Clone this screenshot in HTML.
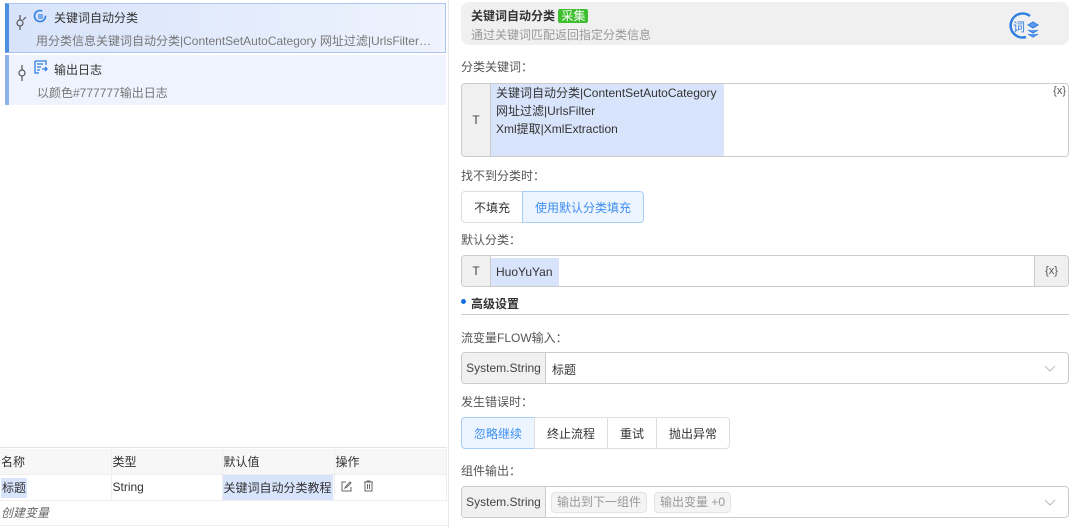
<!DOCTYPE html>
<html><head><meta charset="utf-8"><style>
*{box-sizing:border-box;margin:0;padding:0}
body{width:1072px;height:528px;background:#fff;font-family:"Liberation Sans","Noto Sans CJK SC",sans-serif;font-size:12px;color:#333;position:relative;overflow:hidden}
.a{position:absolute}
.lbl{position:absolute;left:461px;color:#555;font-size:12px}
.box{position:absolute;border:1px solid #ccc;border-radius:4px;background:#fff;overflow:hidden}
.add{position:absolute;top:0;bottom:0;background:#f0f0f0;color:#444;display:flex;align-items:center;justify-content:center}
.btn{position:absolute;border:1px solid #ddd;display:flex;align-items:center;justify-content:center;font-size:12px;color:#333;background:#fff}
.btn.on{background:#ecf4ff;border-color:#a7cdf8;color:#3e8ff0}
td{border-right:1px solid #eee;padding-left:1px}
</style></head><body>
<div class="a" style="left:448px;top:0;width:1px;height:528px;background:#e8e8e8"></div>
<div class="a" style="left:5px;top:3px;width:441px;height:50px;border:1px solid #a9c4f5;border-left:4px solid #4d8fe0;background:linear-gradient(90deg,#d8e4fb,#eef3fd)"></div>
<svg class="a" style="left:14px;top:14px" width="14" height="16" viewBox="0 0 14 16"><circle cx="6" cy="9" r="3" fill="none" stroke="#555" stroke-width="1.2"/><path d="M6 1v5M6 12v4M9 6l3-3" stroke="#555" stroke-width="1.2" fill="none"/></svg>
<svg class="a" style="left:33px;top:9px" width="14" height="14" viewBox="0 0 14 14"><circle cx="7" cy="7" r="5.5" fill="none" stroke="#2f7de0" stroke-width="1.6" stroke-dasharray="28 6"/><rect x="5" y="5" width="5" height="5" fill="#7aa9ec"/></svg>
<div class="a" style="left:54px;top:9px;font-size:12px;color:#333">关键词自动分类</div>
<div class="a" style="left:36px;top:32px;font-size:12px;color:#777">用分类信息关键词自动分类|ContentSetAutoCategory 网址过滤|UrlsFilter…</div>
<div class="a" style="left:5px;top:55px;width:441px;height:50px;border-left:4px solid #8db3ea;background:#eef3fd"></div>
<svg class="a" style="left:16px;top:62px" width="12" height="20" viewBox="0 0 12 20"><circle cx="6" cy="11" r="3" fill="none" stroke="#555" stroke-width="1.2"/><path d="M6 3v5M6 14v5" stroke="#555" stroke-width="1.2"/></svg>
<svg class="a" style="left:34px;top:60px" width="14" height="14" viewBox="0 0 14 14"><path d="M1 1h11v4M1 1v12h4M3 4h6M3 7h4M3 10h3M8 9h5M11 7l2 2-2 2" fill="none" stroke="#2f7de0" stroke-width="1.3"/></svg>
<div class="a" style="left:54px;top:61px">输出日志</div>
<div class="a" style="left:37px;top:84px;color:#777">以颜色#777777输出日志</div>
<div class="a" style="left:0;top:447px;width:447px;height:1px;background:#e5e5e5"></div>
<table class="a" style="left:0;top:449px;width:447px;border-collapse:collapse;font-size:12px;table-layout:fixed">
<colgroup><col style="width:111px"><col style="width:111px"><col style="width:112px"><col></colgroup>
<tr style="height:25px;background:#f7f7f7;border-bottom:1px solid #eee"><td>名称</td><td>类型</td><td>默认值</td><td>操作</td></tr>
<tr style="height:25px;border-bottom:1px solid #eee"><td><span style="background:#d8e4fb;padding:3px 1px">标题</span></td><td>String</td><td style="padding:0"><span style="background:#d8e4fb;padding:4px 1px;display:inline-block">关键词自动分类教程</span></td><td style="color:#666;padding-left:6px">
<svg width="11" height="11" viewBox="0 0 11 11"><path d="M5 1H1v9h9V6M4 7l1-2 4-4 1 1-4 4z" fill="none" stroke="#666"/></svg>
<svg style="margin-left:8px" width="11" height="12" viewBox="0 0 11 12"><path d="M1 2h9M4 2V1h3v1M2 2v9h7V2M4.5 4v5M6.5 4v5" fill="none" stroke="#666"/></svg></td></tr>
<tr style="height:25px;border-bottom:1px solid #eee"><td colspan="4" style="font-style:italic;color:#666;border:none">创建变量</td></tr>
</table>
<div class="a" style="left:461px;top:2px;width:608px;height:43px;background:#f0f0f0;border-radius:8px"></div>
<div class="a" style="left:471px;top:7px;font-weight:bold;font-size:12px">关键词自动分类 <span style="background:#3fbf2f;color:#fff;font-weight:normal;padding:0 3px;border-radius:2px">采集</span></div>
<div class="a" style="left:471px;top:26px;color:#999">通过关键词匹配返回指定分类信息</div>
<svg class="a" style="left:1008px;top:11px" width="32" height="30" viewBox="0 0 32 30"><path d="M22 5A12 12 0 1 0 18 26" fill="none" stroke="#2f7de0" stroke-width="2.5"/><text x="5" y="20" font-size="12" fill="#2f7de0" font-family="Noto Sans CJK SC">词</text><path d="M20 14l5-3 5 3-5 3zM20 19l5 3 5-3M20 23l5 3 5-3" fill="#5b9cf0" stroke="#2f7de0"/></svg>
<div class="lbl" style="top:58px">分类关键词：</div>
<div class="box" style="left:461px;top:83px;width:608px;height:74px">
<div class="add" style="left:0;width:29px;border-right:1px solid #ccc">T</div>
<div class="a" style="left:29px;top:0;width:233px;height:72px;background:#d8e4fb;padding:0 5px;line-height:18px;color:#333">关键词自动分类|ContentSetAutoCategory<br>网址过滤|UrlsFilter<br>Xml提取|XmlExtraction</div>
<div class="a" style="right:2px;top:1px;color:#555;font-size:11px">{x}</div>
</div>
<div class="lbl" style="top:167px">找不到分类时：</div>
<div class="btn" style="left:461px;top:191px;width:62px;height:32px;border-radius:4px 0 0 4px">不填充</div>
<div class="btn on" style="left:522px;top:191px;width:122px;height:32px;border-radius:0 4px 4px 0">使用默认分类填充</div>
<div class="lbl" style="top:231px">默认分类：</div>
<div class="box" style="left:461px;top:255px;width:608px;height:32px">
<div class="add" style="left:0;width:29px;border-right:1px solid #ccc">T</div>
<div class="a" style="left:29px;top:2px;width:68px;height:28px;background:#d8e4fb;padding-left:5px;line-height:28px">HuoYuYan</div>
<div class="add" style="right:0;width:34px;border-left:1px solid #ccc;font-size:11px;color:#555">{x}</div>
</div>
<div class="a" style="left:461px;top:299px;width:5px;height:5px;border-radius:50%;background:#1a6fe0"></div>
<div class="a" style="left:471px;top:295px;font-weight:bold">高级设置</div>
<div class="a" style="left:461px;top:314px;width:608px;height:1px;background:#ccc"></div>
<div class="lbl" style="top:329px">流变量FLOW输入：</div>
<div class="box" style="left:461px;top:352px;width:608px;height:32px">
<div class="add" style="left:0;width:84px;border-right:1px solid #ccc">System.String</div>
<div class="a" style="left:90px;top:8px">标题</div>
<svg class="a" style="right:12px;top:12px" width="12" height="8" viewBox="0 0 12 8"><path d="M1 1l5 5 5-5" fill="none" stroke="#bbb"/></svg>
</div>
<div class="lbl" style="top:393px">发生错误时：</div>
<div class="btn on" style="left:461px;top:417px;width:74px;height:32px;border-radius:4px 0 0 4px">忽略继续</div>
<div class="btn" style="left:534px;top:417px;width:74px;height:32px">终止流程</div>
<div class="btn" style="left:607px;top:417px;width:50px;height:32px">重试</div>
<div class="btn" style="left:656px;top:417px;width:74px;height:32px;border-radius:0 4px 4px 0">抛出异常</div>
<div class="lbl" style="top:462px">组件输出：</div>
<div class="box" style="left:461px;top:486px;width:608px;height:32px">
<div class="add" style="left:0;width:84px;border-right:1px solid #ccc">System.String</div>
<div class="a" style="left:89px;top:5px;height:21px;padding:0 5px;background:#f4f4f4;border:1px solid #e4e4e4;border-radius:4px;color:#999;line-height:19px">输出到下一组件</div>
<div class="a" style="left:192px;top:5px;height:21px;padding:0 5px;background:#f4f4f4;border:1px solid #e4e4e4;border-radius:4px;color:#999;line-height:19px">输出变量 +0</div>
<svg class="a" style="right:12px;top:12px" width="12" height="8" viewBox="0 0 12 8"><path d="M1 1l5 5 5-5" fill="none" stroke="#bbb"/></svg>
</div>
</body></html>
